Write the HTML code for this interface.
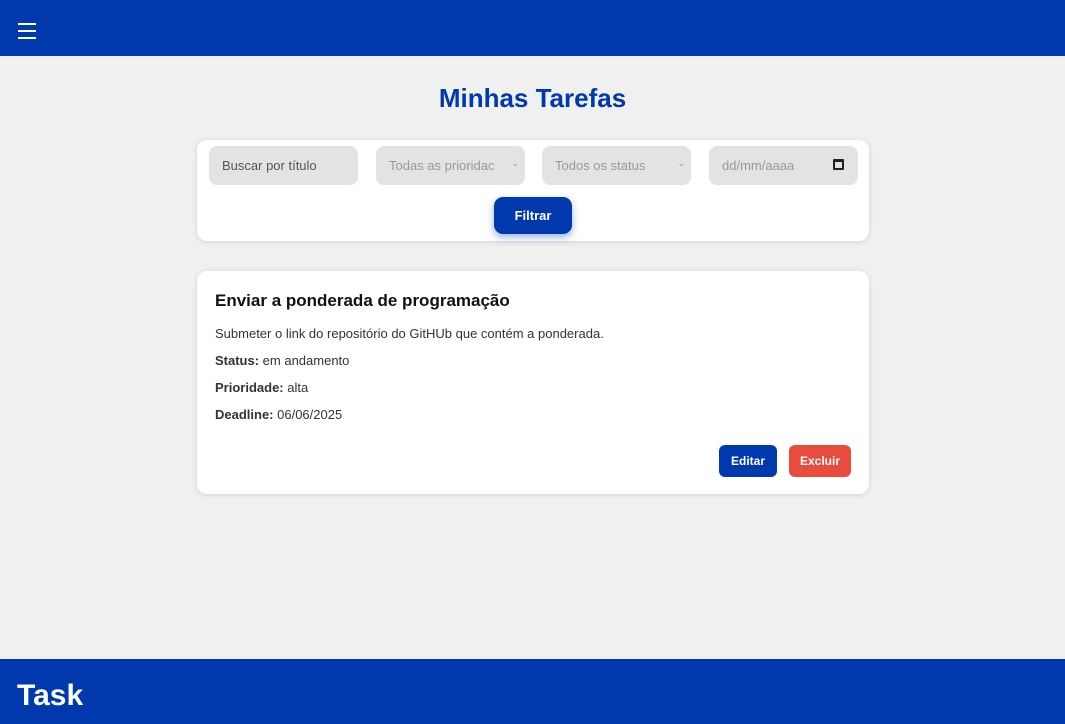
<!DOCTYPE html>
<html><head><meta charset="utf-8">
<style>
*{box-sizing:border-box;margin:0;padding:0}
body{width:1065px;height:724px;background:#f0f0f0;font-family:"Liberation Sans","DejaVu Sans",sans-serif;position:relative;overflow:hidden}
header{position:absolute;top:0;left:0;width:1065px;height:56px;background:#0039ad}
.ham{position:absolute;left:18px;top:23px;width:18px}
.ham i{display:block;height:2px;background:#fff;margin-bottom:5px}
h1{position:absolute;top:83px;width:100%;text-align:center;color:#0039ad;font-size:26px;font-weight:bold}
.filters{position:absolute;left:197px;top:140px;width:672px;height:101px;background:#fff;border-radius:10px;box-shadow:0 1px 6px rgba(0,0,0,.12)}
.f{position:absolute;top:6px;width:149px;height:39px;background:#e3e3e3;border-radius:8px;font-size:13px;color:#999;padding:12px 0 0 13px}
.btn{position:absolute;left:297px;top:57px;width:78px;height:37px;background:#0039ad;color:#fff;border-radius:9px;font-weight:bold;font-size:13px;text-align:center;line-height:37px;box-shadow:0 3px 8px rgba(0,57,173,.4)}
.card{position:absolute;left:197px;top:271px;width:672px;height:223px;background:#fff;border-radius:10px;box-shadow:0 1px 6px rgba(0,0,0,.12)}
.card h2{position:absolute;left:18px;top:20px;font-size:17px;color:#111}
.card p{position:absolute;left:18px;font-size:13px;color:#333}
.card b{color:#333}
.b2{position:absolute;top:174px;height:32px;border-radius:6px;color:#fff;font-size:12px;font-weight:bold;text-align:center;line-height:32px}
footer{position:absolute;left:0;top:659px;width:1065px;height:65px;background:#0039ad;color:#fff;font-size:30px;font-weight:bold;padding:20px 0 0 17px}
</style></head><body>
<header><div class="ham"><i></i><i></i><i></i></div></header>
<h1>Minhas Tarefas</h1>
<div class="filters">
<div class="f" style="left:12px;color:#555">Buscar por título</div>
<div class="f" style="left:179px">Todas as prioridac <span style="position:absolute;right:6px;font-size:9px">⌄</span></div>
<div class="f" style="left:345px">Todos os status <span style="position:absolute;right:6px;font-size:9px">⌄</span></div>
<div class="f" style="left:512px">dd/mm/aaaa <span style="position:absolute;right:14px;top:13px;width:11px;height:11px;border:2px solid #222;border-top-width:3px;border-radius:1px"></span></div>
<div class="btn">Filtrar</div>
</div>
<div class="card">
<h2>Enviar a ponderada de programação</h2>
<p style="top:55px">Submeter o link do repositório do GitHUb que contém a ponderada.</p>
<p style="top:82px"><b>Status:</b> em andamento</p>
<p style="top:109px"><b>Prioridade:</b> alta</p>
<p style="top:136px"><b>Deadline:</b> 06/06/2025</p>
<div class="b2" style="left:522px;width:58px;background:#0039ad">Editar</div>
<div class="b2" style="left:592px;width:62px;background:#e74c3c">Excluir</div>
</div>
<footer>Task</footer>
</body></html>
